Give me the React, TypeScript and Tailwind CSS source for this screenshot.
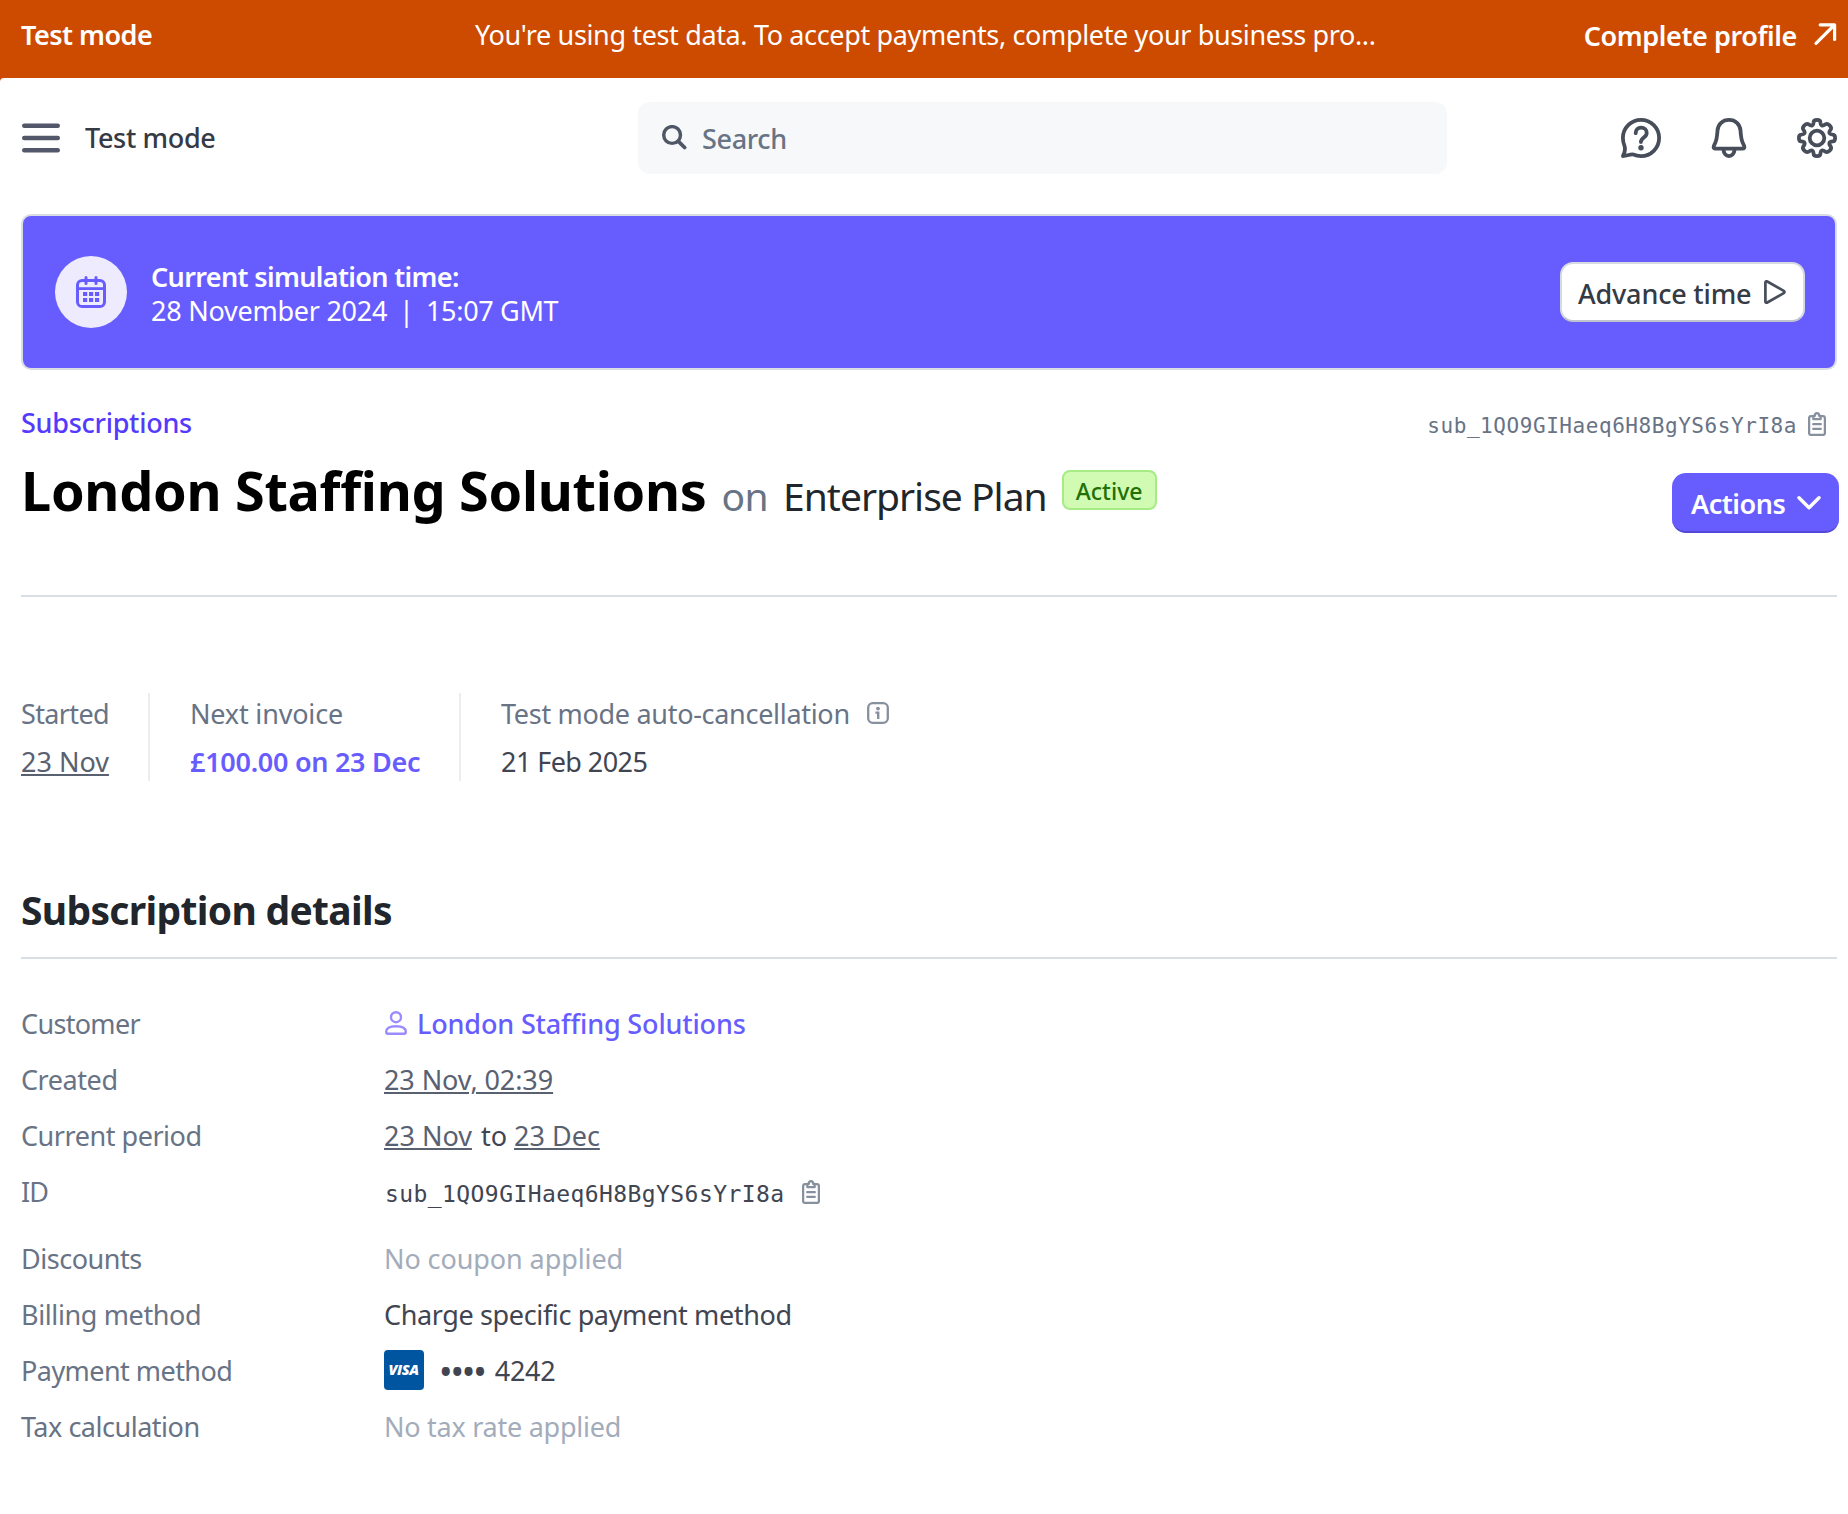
import React, { ReactNode } from 'react';

function ArrowIcon() {
  return (
    <svg className="mt-[4px] ml-[17px] block h-[24px] w-[24px] shrink-0" viewBox="0 0 24 24" fill="none" stroke="#fff" strokeWidth="3.2" strokeLinecap="round" strokeLinejoin="round">
      <path d="M3 21.4 21.4 3M7.2 2.8h14.4v14.6" />
    </svg>
  );
}

function MenuIcon() {
  return (
    <svg className="ml-px block h-[32px] w-[38px] shrink-0" viewBox="0 0 38 32" stroke="#525869" strokeWidth="4.6" strokeLinecap="round">
      <path d="M2.3 3.8h33.4M2.3 16h33.4M2.3 28.2h33.4" />
    </svg>
  );
}

function SearchIcon() {
  return (
    <svg className="-mt-[2px] block h-[25px] w-[25px] shrink-0" viewBox="0 0 25 25" fill="none" stroke="#4f5666" strokeLinecap="round">
      <circle cx="10.1" cy="10" r="8.4" strokeWidth="3.4" />
      <path d="m16.4 16.4 6.2 6.1" strokeWidth="3.8" />
    </svg>
  );
}

function HelpIcon() {
  return (
    <svg className="block h-[40px] w-[40px]" viewBox="0 0 40 40" fill="none" stroke="#474e5a" strokeWidth="3.8" strokeLinecap="round" strokeLinejoin="round">
      <path d="M20 1.9A18.1 18.1 0 1 1 20 38.1C17 38.1 14.5 37.5 12.3 36.5C10 35.5 6.5 37.9 1.9 38C3.4 35.5 4.6 32 3.6 28.2C2.4 25.2 1.9 22.8 1.9 20A18.1 18.1 0 0 1 20 1.9Z" />
      <path d="M14.7 15.2c0-3.4 2.2-5.5 5.4-5.5 3.3 0 5.6 2.1 5.6 5.2 0 4.6-5.8 4.6-5.8 9.2" />
      <circle cx="20" cy="29.7" r="2.7" fill="#474e5a" stroke="none" />
    </svg>
  );
}

function BellIcon() {
  return (
    <svg className="block h-[40px] w-[36px]" viewBox="0 0 36 40" fill="none" stroke="#474e5a" strokeWidth="3.8" strokeLinejoin="round">
      <path d="M18 1.9c6.4 0 11 4.4 11.5 10.6.4 5.2.6 8.8 2.2 12.200l1.500 3.400c.6 1.500-.1 2.600-1.700 2.600H4.500c-1.600 0-2.300-1.100-1.700-2.600l1.500-3.400C5.900 21.300 6.100 17.700 6.500 12.500 7 6.300 11.600 1.900 18 1.900Z" />
      <path d="M12.400 31.500c.4 4 2.600 6.600 5.600 6.600s5.200-2.600 5.600-6.600" />
    </svg>
  );
}

function GearIcon() {
  return (
    <svg className="block h-[40px] w-[40px]" viewBox="0 0 40 40" fill="none" stroke="#474e5a" strokeWidth="3.8" strokeLinejoin="round">
      <path d="M16.6 4.200Q16.700 1.900 20 1.900T23.400 4.200C23.700 8 25.400 8.700 28.400 6.300Q30.300 5.100 32.600 7.400T33.700 11.600C31.300 14.600 32 16.300 35.800 16.600Q38.100 16.700 38.100 20T35.800 23.400C32 23.700 31.300 25.400 33.700 28.400Q34.900 30.300 32.600 32.600T28.400 33.700C25.400 31.300 23.700 32 23.400 35.800Q23.300 38.100 20 38.100T16.600 35.800C16.300 32 14.600 31.300 11.600 33.700Q9.700 34.900 7.400 32.600T6.300 28.400C8.700 25.400 8 23.700 4.200 23.400Q1.900 23.300 1.900 20T4.200 16.600C8 16.300 8.700 14.600 6.300 11.600Q5.100 9.700 7.400 7.400T11.600 6.300C14.600 8.700 16.300 8 16.600 4.200Z" />
      <circle cx="20" cy="20" r="7.300" />
    </svg>
  );
}

function CalendarIcon() {
  return (
    <svg className="block h-[32px] w-[30px]" viewBox="0 0 30 32" fill="none" stroke="#675dff" strokeWidth="3">
      <rect x="1.500" y="4.500" width="27" height="26" rx="4.600" />
      <path d="M1.500 12.600h27" strokeWidth="2.800" />
      <path d="M10 1.500v6M20 1.500v6" strokeLinecap="round" strokeWidth="3" />
      <path d="M7 18h4.200M13 18h4.200M19 18h4.200M7 24h4.200M13 24h4.200M19 24h4.200" strokeWidth="4.200" />
    </svg>
  );
}

function PlayIcon() {
  return (
    <svg className="ml-[13px] block h-[24px] w-[22px]" viewBox="0 0 22 24" fill="none" stroke="#474e5a" strokeWidth="2.700" strokeLinejoin="round">
      <path d="M1.400 2.600c0-1.200.9-1.700 1.900-1.100l16.400 9.300c1.100.7 1.100 1.700 0 2.400L3.300 22.500c-1 .6-1.900.1-1.900-1.100Z" />
    </svg>
  );
}

function ClipboardIcon() {
  return (
    <svg className="block h-[24px] w-[18px] shrink-0" viewBox="0 0 18 24" fill="none" stroke="#87909f" strokeWidth="2.300">
      <path d="M5.500 4.200H3Q1.100 4.200 1.100 6.200V20.900Q1.100 22.900 3 22.900H15Q16.900 22.900 16.900 20.900V6.200Q16.900 4.200 15 4.200H12.500" />
      <path d="M5.400 3.900h1.400C6.800 2.200 7.700 1.200 9 1.200s2.200 1 2.200 2.700h1.400v3.300H5.400Z" strokeLinejoin="round" />
      <path d="M5.200 12.200h7.600M5.200 16.800h7.600" strokeLinecap="round" />
    </svg>
  );
}

function InfoIcon() {
  return (
    <svg className="mt-[5px] ml-[17px] block h-[22px] w-[22px] shrink-0" viewBox="0 0 22 22" fill="none" stroke="#87909f" strokeWidth="2.300">
      <rect x="1.200" y="1.200" width="19.600" height="19.600" rx="4.600" />
      <path d="M8.400 10.600h2.800v6.400" strokeWidth="2.400" />
      <circle cx="11" cy="6.600" r="1.900" fill="#87909f" stroke="none" />
    </svg>
  );
}

function ChevronIcon() {
  return (
    <svg className="mt-px ml-[12px] block h-[16px] w-[24px]" viewBox="0 0 24 16" fill="none" stroke="#fff" strokeWidth="3.400" strokeLinecap="round" strokeLinejoin="round">
      <path d="M2 2.800 12 12.800 22 2.800" />
    </svg>
  );
}

function PersonIcon() {
  return (
    <svg className="ml-px block h-[24px] w-[22px] shrink-0" viewBox="0 0 22 24" fill="none" stroke="#9a8cff" strokeWidth="2.400" strokeLinejoin="round">
      <circle cx="11" cy="6.200" r="5" />
      <path d="M1.200 20.800C1.200 17.400 4 15.200 11 15.200S20.800 17.400 20.800 20.800C20.800 22.200 20.200 22.800 19 22.800H3C1.800 22.800 1.200 22.200 1.200 20.800Z" />
    </svg>
  );
}

function VisaBadge() {
  return (
    <span className="flex h-[40px] w-[40px] items-center justify-center rounded-[4px] bg-[#0055a0] pr-px font-['Open_Sans'] text-[14.5px] leading-none font-extrabold tracking-[-0.4px] text-white italic">
      VISA
    </span>
  );
}

function Stat({ label, first, children }: { label: ReactNode; first?: boolean; children: ReactNode }) {
  return (
    <div className={first ? 'pt-[4px]' : 'border-l-2 border-[#ebeef1] pt-[4px] pl-[40px]'}>
      <div className="flex text-[#687385]">{label}</div>
      <div className="mt-[14px]">{children}</div>
    </div>
  );
}

function Row({ label, children }: { label: ReactNode; children: ReactNode }) {
  return (
    <div className="flex h-[56px] items-center">
      <dt className="w-[363px] pt-[2px] text-[#687385]">{label}</dt>
      <dd className="flex items-center whitespace-pre">{children}</dd>
    </div>
  );
}

const dateLink = 'pt-[2px] text-[#596171] underline decoration-2 underline-offset-[2px]';

export default function App() {
  return (
    <div className="h-[1514px] w-[1848px] overflow-hidden bg-[#cc4b00] font-['Noto_Sans',sans-serif] text-[27px] leading-[34px] whitespace-nowrap text-[#414552]">
      <div className="flex h-[78px] items-start pt-[18px] pr-[11px] pl-[21px] text-white">
        <span className="w-[454px] font-semibold tracking-[-0.51px]">Test mode</span>
        <span className="tracking-[-0.36px]">You're using test data. To accept payments, complete your business pro...</span>
        <span className="-mr-px ml-auto pt-px font-semibold tracking-[-0.4px]">Complete profile</span>
        <ArrowIcon />
      </div>

      <div className="h-[1436px] rounded-tl-[4px] bg-white pt-[24px] pr-[11px] pl-[21px]">
        <header className="flex h-[72px] items-center">
          <MenuIcon />
          <span className="ml-[25px] w-[553px] font-medium tracking-[-0.34px] text-[#353a44]">Test mode</span>
          <div className="flex h-[72px] w-[809px] items-center rounded-[12px] bg-[#f6f8fa] pl-[24px]">
            <SearchIcon />
            <span className="ml-[15px] pt-[2px] font-medium tracking-[-0.35px] text-[#687385]">Search</span>
          </div>
          <div className="ml-auto flex">
            <HelpIcon />
            <span className="ml-[50px]"><BellIcon /></span>
            <span className="ml-[50px]"><GearIcon /></span>
          </div>
        </header>

        <section className="mt-[40px] flex h-[156px] items-center rounded-[10px] border-2 border-[#d8dee4] bg-[#675dff] pr-[30px] pl-[32px]">
          <div className="flex h-[72px] w-[72px] items-center justify-center rounded-full bg-[#efebff]">
            <CalendarIcon />
          </div>
          <div className="ml-[24px] pt-[4px] text-white">
            <div className="font-semibold tracking-[-0.64px]">Current simulation time:</div>
            <div className="flex">
              <span className="w-[248px] tracking-[-0.25px]">28 November 2024</span>
              <span className="w-[27px]">|</span>
              <span className="tracking-[-0.33px]">15:07 GMT</span>
            </div>
          </div>
          <button className="ml-auto flex h-[60px] w-[245px] items-center rounded-[13px] border-2 border-[#d5dbe1] border-b-[#c0c4cc] bg-white pl-[16px] text-[#353a44]">
            <span className="pt-[3px] font-medium tracking-[-0.18px]">Advance time</span>
            <PlayIcon />
          </button>
        </section>

        <div className="mt-[35px] flex h-[34px] items-center">
          <a className="pt-[2px] font-medium tracking-[-0.28px] text-[#533afd]">Subscriptions</a>
          <span className="ml-auto pt-[8px] font-['DejaVu_Sans_Mono',monospace] text-[21px] tracking-[0.56px] text-[#687385]">sub_1QO9GIHaeq6H8BgYS6sYrI8a</span>
          <span className="mt-[4px] mr-[11px] ml-[11px]"><ClipboardIcon /></span>
        </div>

        <div className="mt-[16px] flex h-[78px] items-start">
          <div className="flex items-baseline leading-[70px]">
            <h1 className="text-[54px] font-bold tracking-[-0.3px] text-black">London Staffing Solutions</h1>
            <span className="ml-[15px] text-[39px] tracking-[-0.6px] text-[#687385]">on</span>
            <span className="ml-[15px] text-[39px] tracking-[-1px] text-[#21252c]">Enterprise Plan</span>
          </div>
          <span className="mt-[15px] ml-[15px] flex h-[40px] w-[95px] items-center justify-center rounded-[8px] border-2 border-[#a6eb84] bg-[#d1fab3] pt-[2px] text-[23px] font-medium text-[#217005]">Active</span>
          <button className="mt-[18px] -mr-[2px] ml-auto flex h-[60px] w-[167px] items-center rounded-[14px] border-b-2 border-[#5349d6] bg-[#675dff] pl-[19px] text-white">
            <span className="pt-[4px] font-semibold tracking-[-0.45px]">Actions</span>
            <ChevronIcon />
          </button>
        </div>

        <div className="mt-[62px] h-[2px] bg-[#d8dee4]" />

        <div className="mt-[96px] flex h-[88px]">
          <Stat first label={<span className="w-[127px] tracking-[-0.64px]">Started</span>}>
            <span className={dateLink}>23 Nov</span>
          </Stat>
          <Stat label={<span className="w-[269px] tracking-[-0.18px]">Next invoice</span>}>
            <span className="font-semibold tracking-[-0.28px] text-[#675dff]">£100.00 on 23 Dec</span>
          </Stat>
          <Stat label={<><span className="tracking-[-0.3px]">Test mode auto-cancellation</span><InfoIcon /></>}>
            <span className="tracking-[-0.56px]">21 Feb 2025</span>
          </Stat>
        </div>

        <h2 className="mt-[104px] text-[39px] leading-[50px] font-bold tracking-[-0.68px] text-[#21252c]">Subscription details</h2>
        <div className="mt-[22px] h-[2px] bg-[#d8dee4]" />

        <dl className="mt-[36px]">
          <Row label={<span className="tracking-[-0.68px]">Customer</span>}>
            <PersonIcon />
            <span className="ml-[10px] pt-[2px] font-medium tracking-[-0.16px] text-[#675dff]">London Staffing Solutions</span>
          </Row>
          <Row label={<span className="tracking-[-0.44px]">Created</span>}>
            <span className={`${dateLink} tracking-[-0.08px]`}>23 Nov, 02:39</span>
          </Row>
          <Row label={<span className="tracking-[-0.46px]">Current period</span>}>
            <span className={dateLink}>23 Nov</span>
            <span className="mr-[7px] ml-[9px] pt-[2px]">to</span>
            <span className={dateLink}>23 Dec</span>
          </Row>
          <div className="mb-[11px]">
            <Row label={<span className="tracking-[-1px]">ID</span>}>
              <span className="ml-px pt-[6px] font-['DejaVu_Sans_Mono',monospace] text-[23px] tracking-[0.42px]">sub_1QO9GIHaeq6H8BgYS6sYrI8a</span>
              <span className="mt-[2px] ml-[18px]"><ClipboardIcon /></span>
            </Row>
          </div>
          <Row label={<span className="tracking-[-0.48px]">Discounts</span>}>
            <span className="pt-[2px] tracking-[-0.09px] text-[#a3acba]">No coupon applied</span>
          </Row>
          <Row label={<span className="tracking-[-0.38px]">Billing method</span>}>
            <span className="pt-[2px] tracking-[-0.37px]">Charge specific payment method</span>
          </Row>
          <Row label={<span className="tracking-[-0.55px]">Payment method</span>}>
            <VisaBadge />
            <span className="ml-[15px] pt-[4px] text-[36px] tracking-[-2.1px]">••••</span>
            <span className="ml-[10px] pt-[2px] tracking-[-0.3px]">4242</span>
          </Row>
          <Row label={<span className="tracking-[-0.48px]">Tax calculation</span>}>
            <span className="pt-[2px] tracking-[-0.26px] text-[#a3acba]">No tax rate applied</span>
          </Row>
        </dl>
      </div>
    </div>
  );
}
